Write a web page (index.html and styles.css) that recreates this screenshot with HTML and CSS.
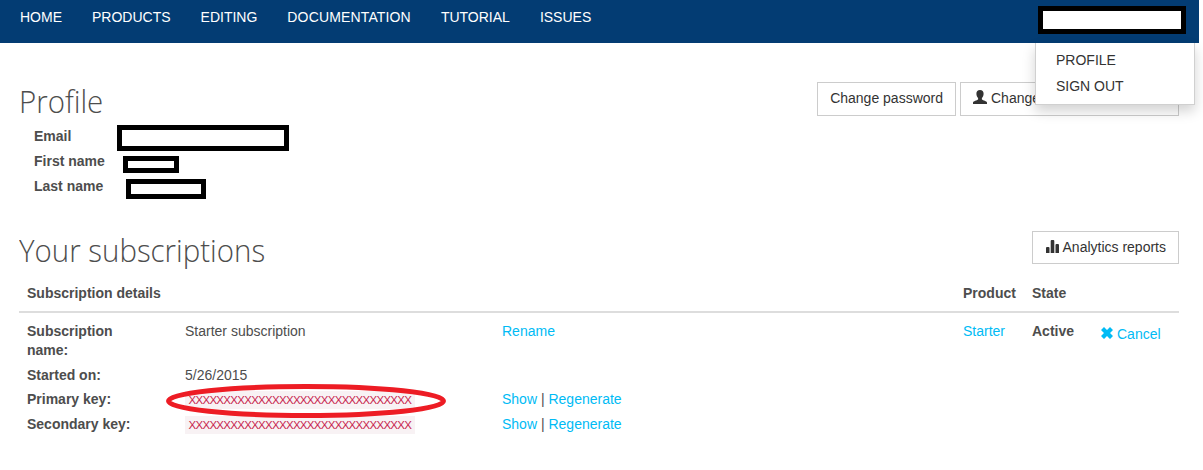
FILE: index.html
```html
<!DOCTYPE html>
<html lang="en">
<head>
<meta charset="utf-8">
<title>Profile</title>
<link rel="stylesheet" href="styles.css">
</head>
<body>
<header class="navbar">
  <nav class="nav-links">
    <a>HOME</a><a>PRODUCTS</a><a>EDITING</a><a class="nav-docs">DOCUMENTATION</a><a>TUTORIAL</a><a>ISSUES</a>
  </nav>
  <div class="account">
    <div class="redacted redacted-user"></div>
    <div class="dropdown"><a>PROFILE</a><a>SIGN OUT</a></div>
  </div>
</header>
<main class="page">
  <section class="heading-row profile-heading">
    <h1 class="title-profile">Profile</h1>
    <div class="actions">
      <a class="btn btn-password">Change password</a>
      <a class="btn btn-info"><svg class="icon-user" viewBox="0 0 14 14"><path d="M7 0C4.700 0 3.300 1.500 3.400 3.700c0 1.800.8 3.300 1.700 4.200v1.600C3.900 10.500.3 10.900 0 12.600V14h14v-1.400c-.3-1.700-3.900-2.100-5.100-3.100V7.900c.9-.9 1.700-2.400 1.700-4.200C10.700 1.500 9.300 0 7 0z"/></svg>Change</a>
    </div>
  </section>
  <dl class="details">
    <dt>Email</dt><dd><div class="redacted redacted-email"></div></dd>
    <dt>First name</dt><dd><div class="redacted redacted-first"></div></dd>
    <dt>Last name</dt><dd><div class="redacted redacted-last"></div></dd>
  </dl>
  <section class="heading-row subs-heading">
    <h1 class="title-subs">Your subscriptions</h1>
    <a class="btn btn-reports"><svg class="icon-chart" viewBox="0 0 13 13"><path d="M0 8q0-1 1-1h1.500q1 0 1 1v5H0zM4.700 1q0-1 1-1h1.600q1 0 1 1v12H4.700zM9.500 5q0-1 1-1H12q1 0 1 1v8H9.500z"/></svg>Analytics reports</a>
  </section>
  <div class="subs-row subs-head">
    <div>Subscription details</div><div>Product</div><div>State</div><div></div>
  </div>
  <div class="subs-row subs-body">
    <div class="fields">
      <div class="field"><b class="name-label">Subscription name:</b><span>Starter subscription</span><span><a class="link">Rename</a></span></div>
      <div class="field"><b>Started on:</b><span>5/26/2015</span></div>
      <div class="field"><b>Primary key:</b>
        <span class="key-cell"><code>XXXXXXXXXXXXXXXXXXXXXXXXXXXXXXXX</code>
          <svg class="marker" viewBox="0 0 280 34"><ellipse cx="140" cy="17" rx="137.500" ry="14.500"/></svg></span>
        <span><a class="link">Show</a> | <a class="link">Regenerate</a></span></div>
      <div class="field"><b>Secondary key:</b><span><code>XXXXXXXXXXXXXXXXXXXXXXXXXXXXXXXX</code></span><span><a class="link">Show</a> | <a class="link">Regenerate</a></span></div>
    </div>
    <div><a class="link">Starter</a></div>
    <div><b>Active</b></div>
    <div class="cancel"><a class="link"><svg class="icon-remove" viewBox="0 0 12 12"><path d="M3 0l3 3 3-3 3 3-3 3 3 3-3 3-3-3-3 3-3-3 3-3-3-3z"/></svg>Cancel</a></div>
  </div>
</main>
</body>
</html>
```
FILE: styles.css
```css
* { box-sizing: border-box; }
body {
  margin: 0;
  background: #fff;
  color: #4d4d4d;
  font: 14px/20px "Liberation Sans", Arial, sans-serif;
}
.navbar {
  display: flex;
  justify-content: space-between;
  width: 1199px;
  height: 43px;
  padding: 6px 13px 0 20px;
  background: #033c73;
}
.nav-links { display: flex; gap: 30px; padding-top: 1px; color: #fff; }
.nav-docs { letter-spacing: .15px; }
.account { position: relative; }
.redacted { border: 5px solid #000; background: #fff; }
.redacted-user { width: 148px; height: 28px; }
.dropdown {
  position: absolute;
  top: 37px;
  left: -3px;
  z-index: 2;
  display: flex;
  flex-direction: column;
  gap: 6px;
  width: 160px;
  height: 62px;
  padding: 7px 20px;
  background: #fff;
  border: 1px solid #d0d0d0;
  border-top: 0;
  box-shadow: 0 6px 12px rgba(0, 0, 0, .18);
  color: #333;
}
.page { width: 1179px; padding-left: 19px; }
.heading-row { display: flex; justify-content: space-between; align-items: flex-start; }
.profile-heading { height: 81px; padding-top: 39px; }
h1 {
  margin: 0;
  font: 300 32px/38px "Open Sans", sans-serif;
  color: #4d4d4d;
  transform: scaleX(.92);
  transform-origin: left;
}
.actions { display: flex; gap: 4px; }
.btn {
  display: flex;
  height: 34px;
  padding: 5px 12px;
  border: 1px solid #ccc;
  background: #fff;
  color: #333;
  white-space: nowrap;
}
.btn svg { fill: #333; flex: none; }
.btn-info { width: 219px; }
.icon-user { width: 14px; height: 14px; margin: 2px 4px 0 0; }
.icon-chart { width: 13px; height: 13px; margin: 3px 4px 0 1px; }
.details {
  display: grid;
  grid-template-columns: 83px auto;
  grid-auto-rows: 25px;
  margin: 0;
  padding-left: 15px;
}
.details dt { padding-top: 2px; font-weight: bold; }
.details dd { margin: 0; }
.redacted-email { width: 172px; height: 26px; margin-top: 1px; }
.redacted-first { width: 56px; height: 17px; margin: 7px 0 0 6px; }
.redacted-last { width: 80px; height: 20px; margin: 5px 0 0 9px; }
.subs-heading { height: 76px; padding-top: 32px; }
.btn-reports { height: 33px; }
.subs-row {
  display: grid;
  grid-template-columns: 936px 69px 68px 1fr;
  padding-left: 8px;
}
.subs-head { height: 38px; padding-top: 8px; border-bottom: 2px solid #ddd; font-weight: bold; }
.subs-body { padding-top: 8px; }
.fields { display: flex; flex-direction: column; gap: 5px; padding-top: 1px; }
.field { display: grid; grid-template-columns: 158px 317px auto; line-height: 19.6px; }
.field:first-child { line-height: 19px; }
.field:nth-child(2) { padding-top: 1px; margin-bottom: -1px; }
.field:last-child { padding-top: 1px; }
.name-label { width: 110px; }
.key-cell { position: relative; }
code {
  padding: 3px 3.5px;
  background: #f8f2f4;
  color: #c7254e;
  font: 11.5px/15px "Liberation Sans", sans-serif;
  letter-spacing: -.71px;
}
.marker {
  position: absolute;
  top: -6px;
  left: -19px;
  width: 280px;
  height: 34px;
  fill: none;
  stroke: #ed1c24;
  stroke-width: 5px;
}
.link { color: #00bbf5; }
.cancel { padding-top: 3px; }
.icon-remove { width: 12px; height: 12px; margin: 0 4px 0 1px; fill: #00bbf5; }
```
